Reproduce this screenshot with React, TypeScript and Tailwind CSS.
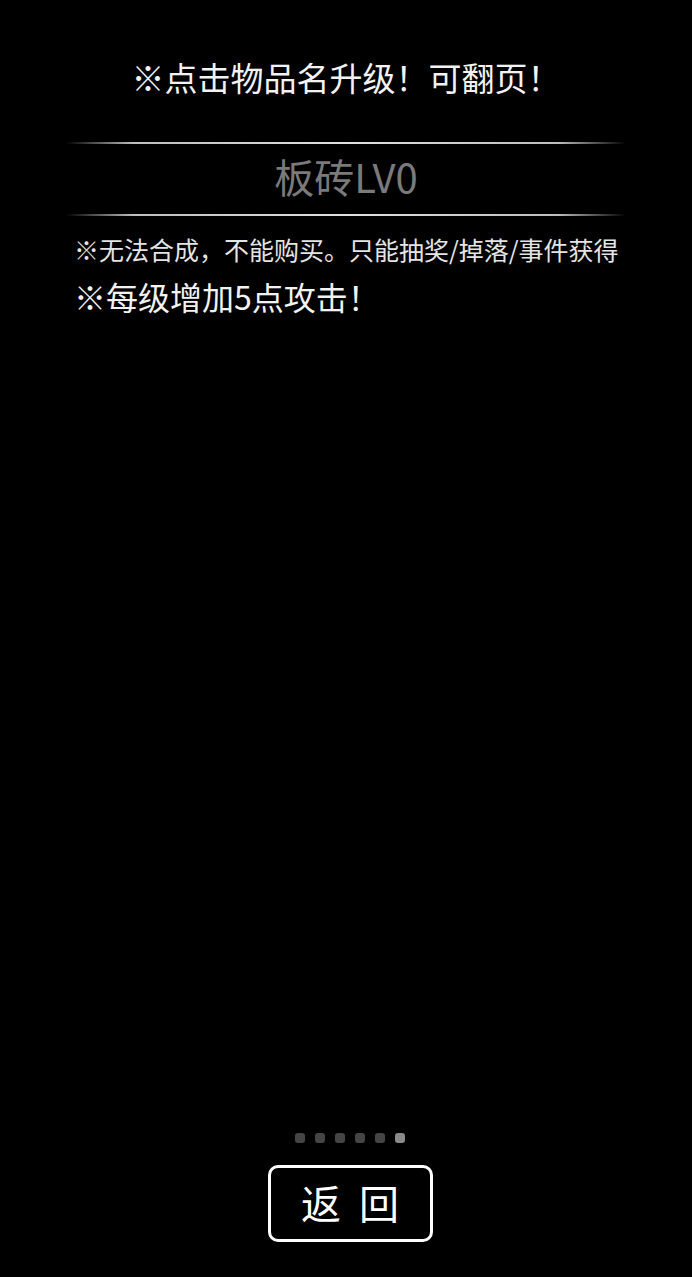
const font = { fontFamily: '"Noto Sans CJK SC", "Noto Sans", sans-serif' }

function GlowLine() {
  return (
    <div className="mx-[66px] h-[2px] bg-[linear-gradient(to_right,transparent_0%,#bdbdbd_12%,#e0e0e0_50%,#bdbdbd_88%,transparent_100%)]" />
  )
}

export default function App() {
  const pages = [0, 1, 2, 3, 4, 5]
  const current = 5

  return (
    <div className="flex h-[1277px] w-full flex-col bg-black text-white" style={font}>
      <div className="pt-[55px] text-center text-[33px] leading-[44px] text-[#f2f2f2]">※点击物品名升级！可翻页！</div>

      <div className="mt-[43px]">
        <GlowLine />
        <div className="pb-[15px] pt-[9px] text-center text-[40px] leading-[46px] text-[#7a7a7a]">板砖LV0</div>
        <GlowLine />
      </div>

      <div className="px-[74px] pt-[16px]">
        <div className="whitespace-nowrap text-[25px] leading-[34px] text-[#e4e4e4]">※无法合成，不能购买。只能抽奖/掉落/事件获得</div>
        <div className="mt-[10px] whitespace-nowrap text-[32px] leading-[40px] text-[#f2f2f2]">※每级增加5点攻击！</div>
      </div>

      <div className="flex-1" />

      <div className="flex justify-center gap-[10px] pl-[8px]">
        {pages.map(p => (
          <div key={p} className={`h-[10px] w-[10px] rounded-[3px] ${p === current ? 'bg-[#8a8a8a]' : 'bg-[#454545]'}`} />
        ))}
      </div>

      <div className="mb-[35px] mt-[22px] flex justify-center pl-[8px]">
        <button className="flex h-[77px] w-[165px] items-center justify-center rounded-[10px] border-[3px] border-white pb-[3px] text-[40px] leading-[48px] text-white">
          返&nbsp;&nbsp;回
        </button>
      </div>
    </div>
  )
}
